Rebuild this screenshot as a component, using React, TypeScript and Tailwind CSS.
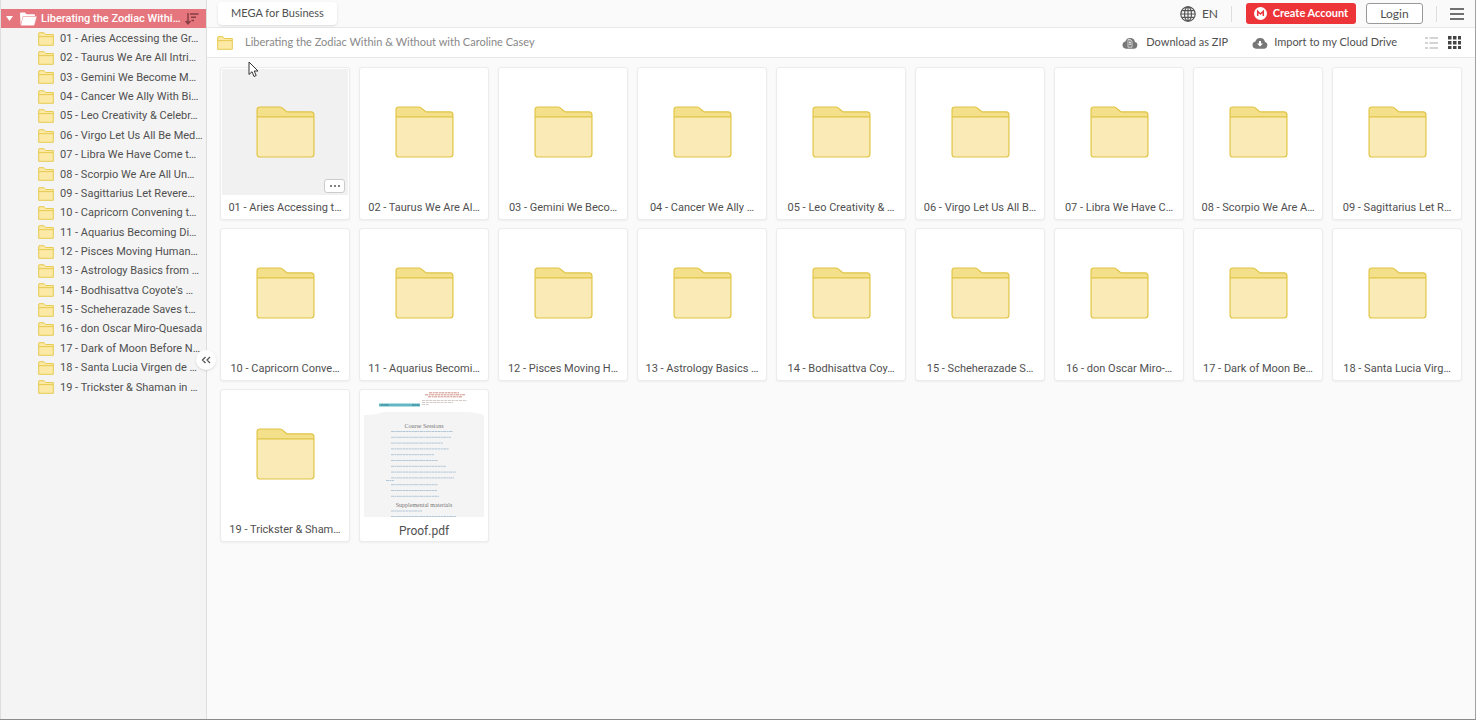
import React from "react";

const folders: [string, string][] = [
  ["01 - Aries Accessing the Gr…", "01 - Aries Accessing t…"],
  ["02 - Taurus We Are All Intri…", "02 - Taurus We Are Al…"],
  ["03 - Gemini We Become M…", "03 - Gemini We Beco…"],
  ["04 - Cancer We Ally With Bi…", "04 - Cancer We Ally …"],
  ["05 - Leo Creativity & Celebr…", "05 - Leo Creativity & …"],
  ["06 - Virgo Let Us All Be Med…", "06 - Virgo Let Us All B…"],
  ["07 - Libra We Have Come t…", "07 - Libra We Have C…"],
  ["08 - Scorpio We Are All Un…", "08 - Scorpio We Are A…"],
  ["09 - Sagittarius Let Revere…", "09 - Sagittarius Let R…"],
  ["10 - Capricorn Convening t…", "10 - Capricorn Conve…"],
  ["11 - Aquarius Becoming Di…", "11 - Aquarius Becomi…"],
  ["12 - Pisces Moving Human…", "12 - Pisces Moving H…"],
  ["13 - Astrology Basics from …", "13 - Astrology Basics …"],
  ["14 - Bodhisattva Coyote's …", "14 - Bodhisattva Coy…"],
  ["15 - Scheherazade Saves t…", "15 - Scheherazade S…"],
  ["16 - don Oscar Miro-Quesada", "16 - don Oscar Miro-…"],
  ["17 - Dark of Moon Before N…", "17 - Dark of Moon Be…"],
  ["18 - Santa Lucia Virgen de …", "18 - Santa Lucia Virg…"],
  ["19 - Trickster & Shaman in …", "19 - Trickster & Sham…"],
];

function SmallFolder() {
  return (
    <svg className="h-[14px] w-4 shrink-0" viewBox="0 0 16 14" aria-hidden="true">
      <path d="M1 .7H6L7.600 2.500H15.300V13.300H.7V1Z" fill="#fbe9a5" stroke="#e6cb50" />
      <path d="M.7 4.600h14.600" stroke="#e6cb50" />
    </svg>
  );
}

function BigFolder() {
  return (
    <svg className="h-[52px] w-[59px]" viewBox="0 0 60 53" aria-hidden="true">
      <path d="M1 11V4q0-3 3-3h20q1.500 0 2.600.9l4.400 3.600q.8.500 2 .5h23q3 0 3 3v5Z" fill="#f4df8b" />
      <path d="M1 11h58v38q0 3-3 3H4q-3 0-3-3Z" fill="#f9eab6" />
      <path d="M4 1h20q1.500 0 2.600.9l4.400 3.600q.8.500 2 .5h23q3 0 3 3v40q0 3-3 3H4q-3 0-3-3V4q0-3 3-3ZM1 11h58" fill="none" stroke="#e0c444" strokeWidth="1.200" />
    </svg>
  );
}

const lineWidths = [62, 60, 52, 58, 43, 47, 55, 65, 63, 47, 46, 48];

function PdfThumb() {
  return (
    <svg className="h-[126px] w-[120px]" viewBox="0 0 120 126" aria-hidden="true">
      <path d="M0 24Q12 24 20 21H105Q114 22 120 24V126H0Z" fill="#f4f4f4" />
      <rect x="15" y="12.500" width="41" height="3" fill="#62b7c2" />
      <path d="M17 14h8M48 14h7" stroke="#357f8d" strokeDasharray="2 .5" />
      <g stroke="#cf9085" strokeDasharray="3 .7 2 .5">
        <path d="M65 1.800h30M61 3.800h40M64 5.800h34" />
      </g>
      <path d="M58 9.500h45M58 11.500h31M58 13.500h7" stroke="#c9bcb9" strokeDasharray="3 .7" strokeWidth=".8" />
      <g fill="#777" fontFamily="Liberation Serif, serif" fontSize="6" textAnchor="middle">
        <text x="60" y="37">Course Sessions</text>
        <text x="60" y="116">Supplemental materials</text>
      </g>
      <g stroke="#abc2d4" strokeDasharray="3 .4 2 .4" strokeWidth=".9">
        {lineWidths.map((w, i) => (
          <path key={i} d={`M27 ${40.5 + i * 5.8 + (i > 8 ? 1 : 0)}h${w}`} />
        ))}
        <path d="M22 89.500h8M27 120h31M27 125.500h65" />
      </g>
    </svg>
  );
}

function CloudDown({ zip = false }: { zip?: boolean }) {
  return (
    <svg className="h-3 w-4" viewBox="0 0 16 12" aria-hidden="true">
      <path d="M4 11.700a3.700 3.700 0 0 1-.6-7.300A5 5 0 0 1 13 4.900a3.500 3.500 0 0 1-.7 6.800Z" fill="#777" />
      {zip ? (
        <path d="M6 2.500v7.700h4V4.200L8.600 2.500ZM8 3v5M7 5.500h2M7 7.500h2" fill="none" stroke="#e5e5e5" strokeWidth=".8" />
      ) : (
        <path d="M7 9.500V7H5l3-3 3 3H9v2.500Z" fill="#fff" transform="rotate(180 8 6.700)" />
      )}
    </svg>
  );
}

export default function App() {
  return (
    <div className="flex min-h-screen border-b border-[#8b8b8b] bg-[#fafafa] font-['Lato','Noto_Sans',sans-serif] text-[11px] text-[#505050]">
      <aside className="relative w-[207px] shrink-0 border-x border-[#dedede] bg-[#f4f4f4] pt-[9px] font-['Roboto','Noto_Sans',sans-serif]">
        <div className="flex h-[19px] items-center bg-[#e6767d] pl-[5px] text-white">
          <svg className="h-[5px] w-[7px] shrink-0" viewBox="0 0 7 5" aria-hidden="true"><path d="M0 0h7L3.500 5Z" fill="#fff" /></svg>
          <svg className="ml-[6px] h-[14px] w-[18px] shrink-0" viewBox="0 0 18 14" aria-hidden="true">
            <path d="M1 1.500q0-1 1-1h4l1.500 1.700H15q1 0 1 1V4H4L1.600 13Z" fill="#fff" />
            <path d="M4 4.500H17.600L15.500 12.500q-.3 1-1.300 1H1.800Z" fill="#fff" stroke="#f0b3b5" strokeWidth=".5" />
          </svg>
          <a href="#root" className="ml-1 min-w-0 flex-1 whitespace-nowrap font-medium leading-[19px]">Liberating the Zodiac Withi…</a>
          <button type="button" aria-label="Sort" className="mr-[7px] shrink-0">
            <svg className="h-3 w-[14px]" viewBox="0 0 14 12" fill="none" stroke="#873e43" strokeWidth="1.500" aria-hidden="true">
              <path d="M3 0v10.500M.6 8 3 10.800 5.400 8M5 1h8.500M6 4.300h5M6.500 7.500h2.500" />
            </svg>
          </button>
        </div>
        <nav className="grid h-[369px] auto-rows-fr pt-px">
          {folders.map(([name], i) => (
            <a key={i} href={`#${i + 1}`} className="flex items-center gap-[6px] whitespace-nowrap pl-[37px]">
              <SmallFolder />
              <span className="pt-px">{name}</span>
            </a>
          ))}
        </nav>
        <button type="button" aria-label="Collapse sidebar" className="absolute -right-[10px] top-1/2 z-10 flex size-5 -translate-y-1/2 items-center justify-center rounded-full bg-white shadow-sm">
          <svg className="h-2 w-[10px]" viewBox="0 0 10 8" fill="none" stroke="#555" strokeWidth="1.300" aria-hidden="true"><path d="M4.500 1 1.500 4l3 3M9 1 6 4l3 3" /></svg>
        </button>
      </aside>
      <div className="flex min-w-0 flex-1 flex-col border-r border-[#a0a0a0]">
        <header className="flex h-[28px] items-center border-b border-[#e8e8e8] px-[11px] text-[12px]">
          <button type="button" className="h-[23px] w-[119px] rounded-sm bg-white text-[11px] shadow">MEGA for Business</button>
          <button type="button" className="ml-auto flex items-center gap-[6px]">
            <svg className="size-4" viewBox="0 0 16 16" fill="none" stroke="#555" strokeWidth="1.200" aria-hidden="true">
              <circle cx="8" cy="8" r="7.200" /><ellipse cx="8" cy="8" rx="3.500" ry="7.200" /><path d="M8 .8v14.400M.8 8h14.400M2 4.700h12M2 11.300h12" />
            </svg>
            EN
          </button>
          <span className="ml-[13px] h-4 w-px bg-[#dedede]" />
          <button type="button" className="ml-[14px] flex h-[21px] w-[110px] items-center justify-center gap-[6px] rounded-[3px] bg-[#ed3439] text-[11px] font-bold text-white">
            <svg className="size-[13px]" viewBox="0 0 13 13" aria-hidden="true"><circle cx="6.500" cy="6.500" r="6.500" fill="#fff" /><path d="M3.700 9V4.200L6.500 7l2.800-2.800V9" fill="none" stroke="#ed3439" strokeWidth="1.500" /></svg>
            Create Account
          </button>
          <button type="button" className="ml-[10px] h-[21px] w-[57px] rounded-[3px] border border-[#999] bg-white">Login</button>
          <span className="ml-[13px] h-4 w-px bg-[#dedede]" />
          <button type="button" aria-label="Menu" className="ml-[13px]">
            <svg className="h-3 w-[14px]" viewBox="0 0 14 12" stroke="#444" strokeWidth="1.500" aria-hidden="true"><path d="M0 1h14M0 6h14M0 11h14" /></svg>
          </button>
        </header>
        <div className="flex h-[30px] items-center border-b border-[#e8e8e8] bg-white pl-[10px] pr-[14px]">
          <SmallFolder />
          <span className="ml-3 text-[#888]">Liberating the Zodiac Within &amp; Without with Caroline Casey</span>
          <button type="button" className="ml-auto flex items-center gap-2"><CloudDown zip />Download as ZIP</button>
          <button type="button" className="ml-6 flex items-center gap-[6px]"><CloudDown />Import to my Cloud Drive</button>
          <button type="button" aria-label="List view" className="ml-7">
            <svg className="h-3 w-[13px]" viewBox="0 0 13 12" stroke="#aaa" strokeWidth="1.200" aria-hidden="true"><path d="M0 1h3M4.500 1H13M0 6h3M4.500 6H13M0 11h3M4.500 11H13" /></svg>
          </button>
          <button type="button" aria-label="Grid view" className="ml-[10px]">
            <svg className="size-[13px]" viewBox="0 0 13 13" fill="#444" aria-hidden="true">
              {[0, 5, 10].map((y) => [0, 5, 10].map((x) => <rect key={`${x}-${y}`} x={x} y={y} width="3.500" height="3.500" />))}
            </svg>
          </button>
        </div>
        <main className="relative grid grid-cols-9 gap-x-[9px] gap-y-2 py-[9px] pl-[13px] pr-[13px] font-['Roboto','Noto_Sans',sans-serif]">
          {folders.map(([, name], i) => (
            <article key={i} className="relative flex h-[153px] min-w-0 flex-col rounded-[3px] border border-[#ececec] bg-white p-px shadow-xs">
              <div className={i === 0 ? "flex h-[126px] items-center justify-center bg-[#f1f1f1]" : "flex h-[126px] items-center justify-center"}>
                <BigFolder />
              </div>
              <a href={`#${i + 1}`} className="flex flex-1 items-center justify-center whitespace-nowrap pt-1">{name}</a>
              {i === 0 && (
                <button type="button" aria-label="More options" className="absolute bottom-[26px] right-1 flex h-[14px] w-[21px] items-center justify-center gap-[2px] rounded-[3px] border border-[#ccc] bg-white">
                  <span className="size-[2px] rounded-full bg-[#555]" /><span className="size-[2px] rounded-full bg-[#555]" /><span className="size-[2px] rounded-full bg-[#555]" />
                </button>
              )}
            </article>
          ))}
          <article className="flex h-[153px] min-w-0 flex-col items-center rounded-[3px] border border-[#ececec] bg-white p-px shadow-xs">
            <PdfThumb />
            <a href="#proof" className="flex flex-1 items-center pt-1 text-[12px]">Proof.pdf</a>
          </article>
          <svg className="absolute left-[41px] top-[3px] h-[17px] w-[11px]" viewBox="0 0 11 17" aria-hidden="true">
            <path d="M1 1v12.500l3-2.800 2 4.800 2.200-1-2-4.500H10Z" fill="#fff" stroke="#333" />
          </svg>
        </main>
      </div>
    </div>
  );
}
